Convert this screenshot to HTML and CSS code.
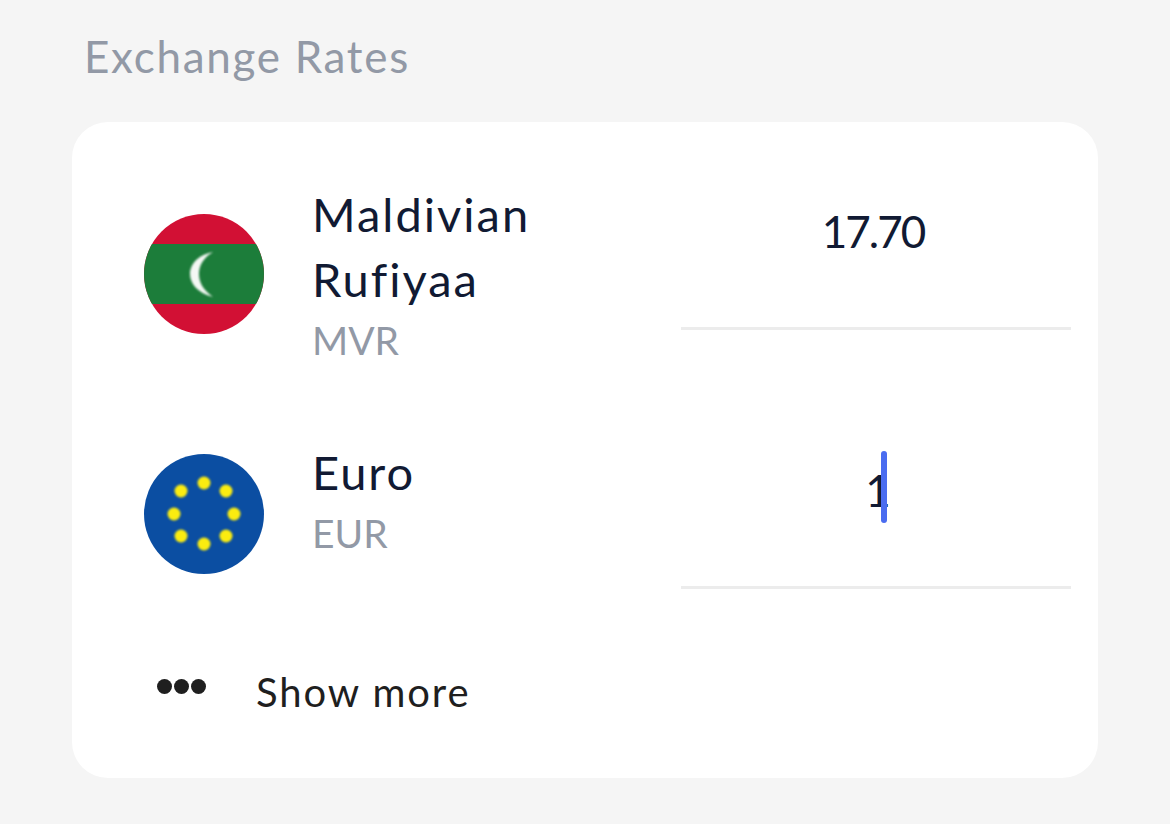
FILE: index.html
```html
<!DOCTYPE html>
<html lang="en">
<head>
    <meta charset="UTF-8">
    <title>Exchange Rates</title>
    <link rel="stylesheet" href="styles.css">
</head>
<body>
    <h2 class="section-title">Exchange Rates</h2>
    <div class="card">
        <div class="rate-row rate-row-first">
            <svg class="flag" viewBox="0 0 120 120">
                <defs><clipPath id="clip-mv"><circle cx="60" cy="60" r="60"/></clipPath></defs>
                <g clip-path="url(#clip-mv)">
                    <rect width="120" height="120" fill="#d21034"/>
                    <rect y="30" width="120" height="60" fill="#1c7d3a"/>
                    <path class="soft" d="M69 38C53 41 46 51 46 60C46 69 53 79 69 83C59 76 55 68 55 60C55 52 59 44 69 38Z" fill="#f4f8f4"/>
                </g>
            </svg>
            <div class="currency">
                <div class="currency-name">Maldivian<br>Rufiyaa</div>
                <div class="currency-code">MVR</div>
            </div>
            <div class="amount amount-first">
                <span class="amount-value">17.70</span>
            </div>
        </div>
        <div class="rate-row rate-row-second">
            <svg class="flag" viewBox="0 0 120 120">
                <circle cx="60" cy="60" r="60" fill="#0b4ea2"/>
                <g class="soft" fill="#fbec10">
                    <circle cx="60" cy="29" r="6.5"/>
                    <circle cx="82" cy="37" r="6.5"/>
                    <circle cx="90" cy="60" r="6.5"/>
                    <circle cx="82" cy="82" r="6.5"/>
                    <circle cx="60" cy="90" r="6.5"/>
                    <circle cx="37" cy="82" r="6.5"/>
                    <circle cx="30" cy="60" r="6.5"/>
                    <circle cx="37" cy="37" r="6.5"/>
                </g>
            </svg>
            <div class="currency">
                <div class="currency-name">Euro</div>
                <div class="currency-code">EUR</div>
            </div>
            <div class="amount amount-second">
                <span class="amount-value">1</span><span class="caret"></span>
            </div>
        </div>
        <div class="show-more">
            <span class="dots"><i></i><i></i><i></i></span>
            <span class="show-more-label">Show more</span>
        </div>
    </div>
</body>
</html>
```

FILE: styles.css
```css
body {
    background-color: #f5f5f5;
    color: #111a33;
    font-family: Lato, "Open Sans", sans-serif;
    margin: 0;
    padding: 0;
    overflow: hidden;
}
.section-title {
    margin: 0;
    padding: 31px 0 0 84px;
    height: 90px;
    box-sizing: border-box;
    font-size: 44px;
    letter-spacing: 1.7px;
    line-height: 50px;
    font-weight: 400;
    color: #9299a6;
}
.card {
    margin: 32px 0 0 72px;
    width: 1026px;
    height: 656px;
    box-sizing: border-box;
    background-color: #fff;
    border-radius: 36px;
    padding-top: 62px;
}
.rate-row {
    display: flex;
    align-items: flex-start;
    padding-left: 72px;
}
.rate-row-first {
    margin-bottom: 76px;
}
.rate-row-first .flag {
    margin-top: 30px;
}
.rate-row-second {
    margin-bottom: 78px;
}
.rate-row-second .flag {
    margin-top: 12px;
}
.flag {
    width: 120px;
    height: 120px;
    flex: none;
}
.soft {
    filter: blur(1px);
}
.currency {
    margin: -2px 0 0 48px;
    width: 369px;
}
.currency-name {
    font-size: 47px;
    letter-spacing: 2px;
    line-height: 65px;
}
.currency-code {
    margin-top: 2px;
    font-size: 39px;
    line-height: 52px;
    color: #9299a6;
}
.amount {
    width: 390px;
    border-bottom: 3px solid #ececec;
    box-sizing: border-box;
    display: flex;
    justify-content: center;
    font-size: 44px;
    letter-spacing: -2px;
}
.amount-first {
    height: 146px;
    padding: 14px 6px 0 0;
    line-height: 66px;
}
.amount-second {
    height: 147px;
    padding-top: 9px;
    line-height: 78px;
}
.caret {
    width: 6px;
    height: 72px;
    margin-left: -8px;
    border-radius: 3px;
    background-color: #4a6cf0;
}
.show-more {
    display: flex;
    align-items: center;
    height: 50px;
    padding-left: 85px;
    color: #1f1f1f;
}
.show-more-label {
    font-size: 40px;
    letter-spacing: 1.9px;
}
.dots {
    display: flex;
    gap: 2px;
    width: 99px;
    margin-top: -12px;
}
.dots i {
    width: 15px;
    height: 15px;
    border-radius: 50%;
    background-color: #1f1f1f;
}
```
